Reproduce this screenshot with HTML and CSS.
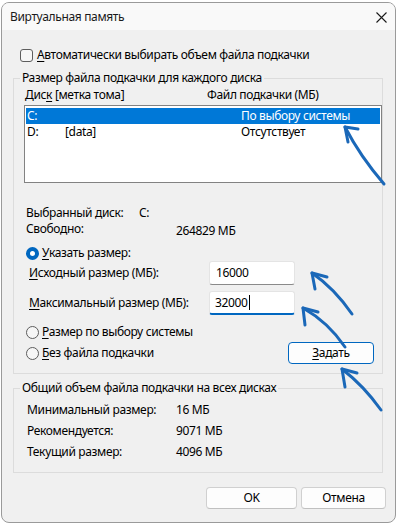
FILE: index.html
```html
<!DOCTYPE html>
<html lang="ru">

<head>
    <meta charset="UTF-8">
    <meta name="viewport" content="width=device-width, initial-scale=1.0">
    <title>Виртуальная память</title>
    <link rel="stylesheet" href="styles.css">
</head>

<body>
    <div class="window">
        <div class="titlebar">
            <span class="title">Виртуальная память</span>
            <svg class="close" width="11" height="11" viewBox="0 0 11 11">
                <path d="M0.5 0.5 L10.5 10.5 M10.5 0.5 L0.5 10.5" stroke="#1a1a1a" stroke-width="1.1" fill="none"/>
            </svg>
        </div>

        <div class="content">
            <div class="check-row">
                <span class="checkbox"></span>
                <span><u>А</u>втоматически выбирать объем файла подкачки</span>
            </div>

            <fieldset class="group group-disks">
                <legend>Размер файла подкачки для каждого диска</legend>

                <div class="list-head">
                    <span class="col-disk">Дис<u>к</u> [метка тома]</span>
                    <span>Файл подкачки (МБ)</span>
                </div>

                <div class="listbox">
                    <div class="list-row selected">
                        <span class="col-letter">C:</span>
                        <span class="col-label"></span>
                        <span>По выбору системы</span>
                    </div>
                    <div class="list-row">
                        <span class="col-letter">D:</span>
                        <span class="col-label">[data]</span>
                        <span>Отсутствует</span>
                    </div>
                </div>

                <div class="info-row first">
                    <span class="info-label short">Выбранный диск:</span>
                    <span>C:</span>
                </div>
                <div class="info-row">
                    <span class="info-label">Свободно:</span>
                    <span class="info-low">264829 МБ</span>
                </div>

                <div class="radio-row custom">
                    <span class="radio checked"></span>
                    <span><u>У</u>казать размер:</span>
                </div>
                <div class="size-row">
                    <span class="size-label"><u>И</u>сходный размер (МБ):</span>
                    <div class="input">16000</div>
                </div>
                <div class="size-row second">
                    <span class="size-label"><u>М</u>аксимальный размер (МБ):</span>
                    <div class="input focused">32000<span class="caret"></span></div>
                </div>
                <div class="radio-row system">
                    <span class="radio"></span>
                    <span><u>Р</u>азмер по выбору системы</span>
                </div>
                <div class="radio-row set-row">
                    <span class="radio"></span>
                    <span><u>Б</u>ез файла подкачки</span>
                    <button class="btn btn-default"><u>З</u>адать</button>
                </div>
            </fieldset>

            <fieldset class="group group-total">
                <legend>Общий объем файла подкачки на всех дисках</legend>
                <div class="totals">
                    <span>Минимальный размер:</span><span>16 МБ</span>
                    <span>Рекомендуется:</span><span>9071 МБ</span>
                    <span>Текущий размер:</span><span>4096 МБ</span>
                </div>
            </fieldset>

            <div class="footer">
                <button class="btn btn-ok">OK</button>
                <button class="btn btn-cancel">Отмена</button>
            </div>
        </div>
    </div>

    <!-- пометки поверх скриншота -->
    <svg class="arrows" width="396" height="523" viewBox="0 0 396 523">
        <g stroke="#1b68b8" stroke-width="3" stroke-linecap="round" stroke-linejoin="round" fill="none">
            <path d="M384 184 Q360 156 345 127"/>
            <path d="M345 127 L358 129 M345 127 L348 142"/>
            <path d="M352 314 Q334 288 312 273"/>
            <path d="M312 273 L327 277 M312 273 L315 289"/>
            <path d="M345 347 Q328 322 303 308"/>
            <path d="M303 308 L318 312 M303 308 L305 325"/>
            <path d="M381 410 Q364 386 342 369"/>
            <path d="M342 369 L357 373 M342 369 L345 387"/>
        </g>
    </svg>
</body>

</html>
```

FILE: styles.css
```css
* {
    box-sizing: border-box;
}

body {
    margin: 0;
    background-color: #ffffff;
    font-family: 'Noto Sans', 'DejaVu Sans', sans-serif;
    font-size: 12px;
    line-height: 16px;
    letter-spacing: -0.35px;
    color: #000000;
    position: relative;
    width: 396px;
    height: 523px;
    overflow: hidden;
}

u {
    text-decoration-thickness: 1px;
    text-underline-offset: 2px;
}

.window {
    width: 395px;
    height: 521px;
    margin: 2px 0 0 1px;
    border: 1px solid #9a9a9a;
    border-radius: 8px;
    background-color: #f0f0f0;
    overflow: hidden;
    display: flex;
    flex-direction: column;
}

.titlebar {
    height: 27px;
    flex-shrink: 0;
    background-color: #f9f9f9;
    display: flex;
    align-items: center;
    justify-content: space-between;
    padding: 0 8px 0 8px;
}

.title {
    color: #1a1a1a;
}

.close {
    margin-top: 1px;
}

.content {
    flex: 1;
    padding: 0 12px 0 11px;
}

/* чекбокс сверху */
.check-row {
    display: flex;
    align-items: center;
    gap: 4px;
    height: 14px;
    margin-top: 18px;
    padding-left: 7px;
}

.checkbox {
    width: 13px;
    height: 13px;
    border: 1px solid #5d5d5d;
    border-radius: 3px;
    background-color: #f6f6f6;
    flex-shrink: 0;
}

/* групповые рамки */
.group {
    margin: 0;
    min-width: 0;
    border: 1px solid #dcdcdc;
}

.group legend {
    padding: 0 2px;
    margin-left: -4px;
    line-height: 16px;
}

.group-disks {
    margin-top: 8px;
    padding: 1px 8px 9px 10px;
}

.list-head {
    display: flex;
    height: 16px;
    padding-left: 1px;
}

.col-disk {
    width: 182px;
}

.listbox {
    margin-top: 2px;
    margin-right: -8px;
    height: 78px;
    border: 1px solid #828282;
    background-color: #ffffff;
    padding: 2px 1px;
}

.list-row {
    display: flex;
    height: 16px;
    line-height: 16px;
    padding-left: 1px;
}

.list-row.selected {
    background-color: #0078d7;
    color: #ffffff;
}

.col-letter {
    width: 38px;
}

.col-label {
    width: 176px;
}

.info-row {
    display: flex;
    height: 16px;
    padding-left: 2px;
}

.info-row.first {
    margin-top: 22px;
}

.info-label {
    width: 150px;
}

.info-label.short {
    width: 113px;
}

.info-low {
    padding-top: 2px;
}

.radio-row {
    display: flex;
    align-items: center;
    gap: 3px;
    height: 16px;
    padding-left: 2px;
}

.radio-row.custom {
    margin-top: 8px;
}

.radio-row.system {
    margin-top: 9px;
}

.radio {
    width: 13px;
    height: 13px;
    border: 1px solid #5d5d5d;
    border-radius: 50%;
    background-color: #f6f6f6;
    flex-shrink: 0;
}

.radio.checked {
    border: 4px solid #0067c0;
    background-color: #ffffff;
}

.size-row {
    display: flex;
    align-items: center;
    height: 24px;
    padding-left: 5px;
}

.size-row.second {
    margin-top: 6px;
}

.size-label {
    width: 180px;
    flex-shrink: 0;
}

.input {
    width: 86px;
    height: 24px;
    background-color: #ffffff;
    border: 1px solid #e4e4e4;
    border-bottom-color: #8a8a8a;
    border-radius: 3px;
    padding-left: 6px;
    line-height: 22px;
    display: flex;
    align-items: center;
}

.input.focused {
    border-bottom: 2px solid #0067c0;
    padding-left: 5px;
}

.caret {
    width: 1px;
    height: 15px;
    background-color: #000000;
    margin-left: 1px;
}

.set-row {
    height: 22px;
    margin-top: 2px;
}

.btn {
    font-family: inherit;
    font-size: 12px;
    line-height: 16px;
    letter-spacing: inherit;
    color: #000000;
    height: 22px;
    padding: 0;
    background-color: #fdfdfd;
    border: 1px solid #d0d0d0;
    border-bottom-color: #c0c0c0;
    border-radius: 4px;
}

.btn-default {
    margin-left: auto;
    width: 86px;
    border: 1px solid #0067c0;
}

.group-total {
    margin-top: 6px;
    padding: 6px 8px 12px 10px;
}

.totals {
    display: grid;
    grid-template-columns: 149px auto;
    row-gap: 5px;
    padding-left: 3px;
}

.footer {
    display: flex;
    justify-content: flex-end;
    gap: 4px;
    margin-top: 14px;
    margin-right: -3px;
}

.btn-ok {
    width: 91px;
}

.btn-cancel {
    width: 85px;
}

.arrows {
    position: absolute;
    left: 0;
    top: 0;
    pointer-events: none;
}
```
